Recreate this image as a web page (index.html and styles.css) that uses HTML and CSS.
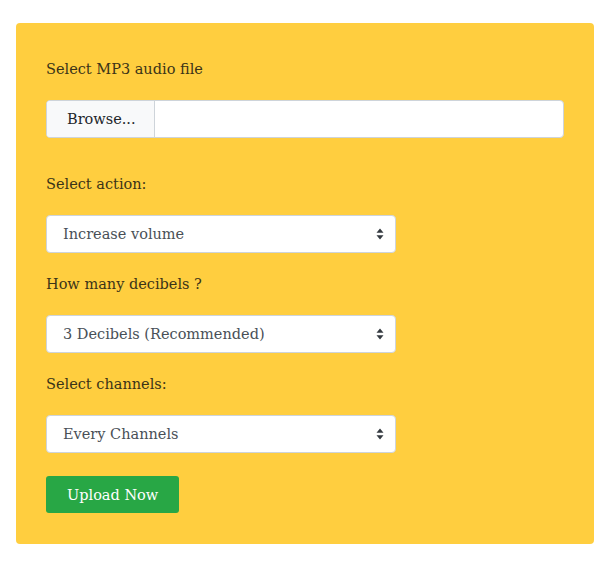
FILE: index.html
```html
<html>
<head>
<meta name="viewport" content="width=device-width, initial-scale=1.0">
<link rel="stylesheet" href="styles.css">
</head>
<body>

<div class="card">
    <form class="upload-form">

        <div class="group">
            <label class="caption">Select MP3 audio file</label>
            <div class="file-field">
                <span class="browse">Browse...</span>
                <span class="file-name"></span>
            </div>
        </div>

        <div class="group group-wide">
            <label class="caption">Select action:</label>
            <div class="select-wrap">
                <select class="picker">
                    <option>Increase volume</option>
                    <option>Decrease volume</option>
                </select>
                <svg class="arrows" width="8" height="12" viewBox="0 0 8 12"><path d="M4 0.5 L7.5 4.8 L0.5 4.8 Z M4 11.5 L7.5 7.2 L0.5 7.2 Z" fill="#343a40"/></svg>
            </div>
        </div>

        <div class="group">
            <label class="caption">How many decibels ?</label>
            <div class="select-wrap">
                <select class="picker">
                    <option>3 Decibels (Recommended)</option>
                    <option>6 Decibels</option>
                </select>
                <svg class="arrows" width="8" height="12" viewBox="0 0 8 12"><path d="M4 0.5 L7.5 4.8 L0.5 4.8 Z M4 11.5 L7.5 7.2 L0.5 7.2 Z" fill="#343a40"/></svg>
            </div>
        </div>

        <div class="group">
            <label class="caption">Select channels:</label>
            <div class="select-wrap">
                <select class="picker">
                    <option>Every Channels</option>
                    <option>Left</option>
                    <option>Right</option>
                </select>
                <svg class="arrows" width="8" height="12" viewBox="0 0 8 12"><path d="M4 0.5 L7.5 4.8 L0.5 4.8 Z M4 11.5 L7.5 7.2 L0.5 7.2 Z" fill="#343a40"/></svg>
            </div>
        </div>

        <button type="button" class="upload">Upload Now</button>

    </form>
</div>

</body>
</html>
```

FILE: styles.css
```css
body, html {
    margin: 0;
    padding: 0;
    background: #fff;
    font-family: 'DejaVu Serif', 'Liberation Serif', serif;
    font-size: 14.5px;
}

.card {
    margin: 23px 18px 0 16px;
    padding: 34px 30px 31px 30px;
    background-color: #ffce3f;
    border-radius: 4px;
}

.upload-form {
    display: flex;
    flex-direction: column;
    margin: 0;
}

.group {
    display: flex;
    flex-direction: column;
    gap: 19px;
    margin-bottom: 19px;
}

.group-wide {
    margin-top: 15px;
}

.caption {
    display: block;
    line-height: 24px;
    color: #3b3418;
}

.file-field {
    display: flex;
    height: 38px;
    box-sizing: border-box;
    border: 1px solid #ced4da;
    border-radius: 4px;
    background: #fff;
    overflow: hidden;
}

.browse {
    display: flex;
    align-items: center;
    padding: 0 20px;
    width: 108px;
    box-sizing: border-box;
    background: #f8f9fa;
    border-right: 1px solid #ced4da;
    color: #212529;
}

.file-name {
    flex: 1;
}

.select-wrap {
    position: relative;
    width: 350px;
}

.picker {
    -webkit-appearance: none;
    appearance: none;
    width: 100%;
    height: 38px;
    box-sizing: border-box;
    padding: 0 30px 0 16px;
    border: 1px solid #ced4da;
    border-radius: 4px;
    background: #fff;
    font-family: inherit;
    font-size: 14.5px;
    color: #495057;
}

.arrows {
    position: absolute;
    right: 12px;
    top: 13px;
}

.upload {
    align-self: flex-start;
    margin-top: 4px;
    height: 37px;
    padding: 0 21px;
    border: none;
    border-radius: 3px;
    background: #28a745;
    color: #fff;
    font-family: inherit;
    font-size: 14.5px;
}
```
